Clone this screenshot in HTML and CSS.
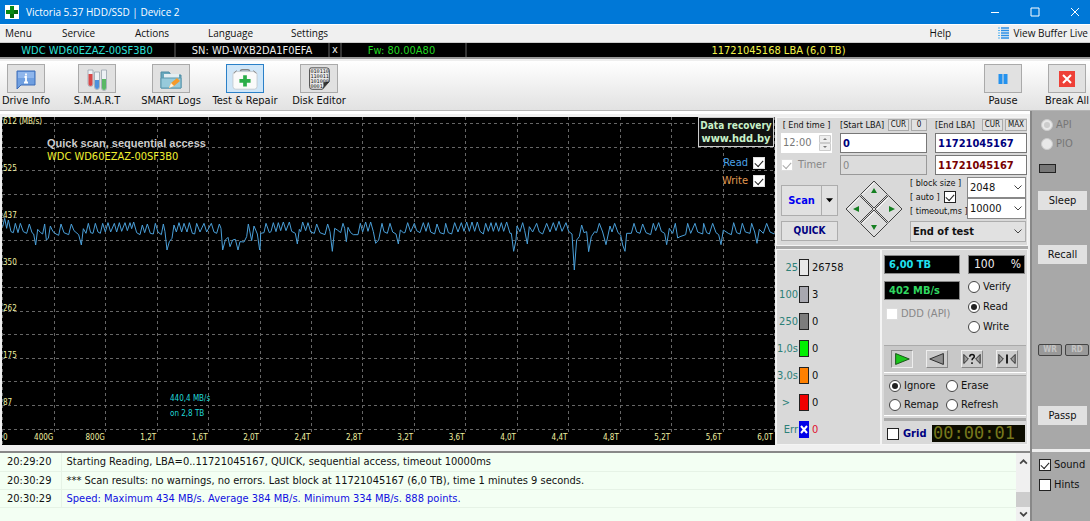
FILE: index.html
```html
<!DOCTYPE html>
<html lang="en">
<head>
<meta charset="utf-8">
<title>Victoria 5.37 HDD/SSD | Device 2</title>
<link rel="stylesheet" href="styles.css">
</head>
<body>
<header class="titlebar">
  <svg class="app-icon" viewBox="0 0 14 14"><rect width="14" height="14" fill="#fff"/><path d="M5 1h4v4h4v4H9v4H5V9H1V5h4z" fill="#0a8a14"/><path d="M5 9h4v4H5zM9 5h4v4H9z" fill="#056a0c"/></svg>
  <h1 class="title">Victoria 5.37 HDD/SSD | Device 2</h1>
  <button class="win-btn" aria-label="Minimize"><svg viewBox="0 0 10 10"><path d="M1 5.5h8" /></svg></button>
  <button class="win-btn" aria-label="Maximize"><svg viewBox="0 0 10 10"><path d="M1 1h8v8H1z" /></svg></button>
  <button class="win-btn" aria-label="Close"><svg viewBox="0 0 10 10"><path d="M1 1l8 8M9 1L1 9" /></svg></button>
</header>
<nav class="menubar">
  <button class="menu-item">Menu</button>
  <button class="menu-item">Service</button>
  <button class="menu-item">Actions</button>
  <button class="menu-item">Language</button>
  <button class="menu-item">Settings</button>
  <button class="menu-item menu-help">Help</button>
  <button class="menu-item menu-live"><svg viewBox="0 0 12 12"><path d="M0 1h2M0 3.5h2M0 6h2M0 8.5h2M0 11h2" stroke="#58b4f0"/><path d="M3 1h8M3 3.5h8M3 6h8M3 8.5h8M3 11h8" stroke="#2b8fe6" stroke-width="1.5"/></svg>View Buffer Live</button>
</nav>
<div class="infobar">
  <span class="info-model">WDC WD60EZAZ-00SF3B0</span>
  <span class="info-serial">SN: WD-WXB2DA1F0EFA</span>
  <button class="info-x">x</button>
  <span class="info-fw">Fw: 80.00A80</span>
  <span class="info-lba">11721045168 LBA (6,0 TB)</span>
</div>
<div class="toolbar">
  <button class="tool tool-first"><span class="tool-face"><svg viewBox="0 0 24 24"><path d="M3 4h18v14H7l-4 4z" fill="#6f9fe0" stroke="#3c6db8"/><path d="M4 5h16v6H4z" fill="#8fb6ec"/><path d="M12 6.500v2M10.500 10H12v5M10 15.500h4" stroke="#fff" stroke-width="1.800" fill="none"/></svg></span>Drive Info</button>
  <button class="tool"><span class="tool-face"><svg viewBox="0 0 24 24"><g stroke="#99a3ad" stroke-width=".8"><path d="M3 3h5v14a2.500 2.500 0 0 1-5 0z" fill="#edf1f5"/><path d="M9.500 5h5v15a2.500 2.500 0 0 1-5 0z" fill="#edf1f5"/><path d="M16.500 3h5v18a2.500 2.500 0 0 1-5 0z" fill="#edf1f5"/></g><path d="M3.500 7h4v10a2 2 0 0 1-4 0z" fill="#d94848"/><path d="M10 13h4v7a2 2 0 0 1-4 0z" fill="#4d91dc"/><path d="M17 12h4v9a2 2 0 0 1-4 0z" fill="#59b865"/></svg></span>S.M.A.R.T</button>
  <button class="tool"><span class="tool-face"><svg viewBox="0 0 24 24"><path d="M2 5h8l2 3h10v13H2z" fill="#69a8bd" stroke="#4f8ca4"/><path d="M5 7h15v7H5z" fill="#e4eef2"/><path d="M2 11h20v10H2z" fill="#96cadb" stroke="#5a98ae"/><path d="M10 21l2-5 6-5 3 3-6 5z" fill="#f59a2b"/><path d="M10 21l2-5 3 3z" fill="#fff1dc"/></svg></span>SMART Logs</button>
  <button class="tool tool-active"><span class="tool-face"><svg viewBox="0 0 28 24"><path d="M9 4q0-2 2-2h6q2 0 2 2" fill="none" stroke="#858585" stroke-width="1.500"/><rect x="1" y="4" width="26" height="19" rx="3" fill="#fafafa" stroke="#c2cbd2"/><path d="M2 6l3-3M26 6l-3-3" stroke="#777"/><path d="M12 8h4v4h4v4h-4v4h-4v-4H8v-4h4z" fill="#2bad48"/></svg></span>Test &amp; Repair</button>
  <button class="tool"><span class="tool-face"><svg viewBox="0 0 26 28"><path d="M4 1h18q3 0 3 3v13l-8 9H5q-3 0-3-3V3q0-2 2-2z" fill="#e9e9e9" stroke="#333"/><path d="M25 17l-8 9q2-4 1-8z" fill="#333"/><g class="bits"><text x="3" y="7">010110</text><text x="3" y="13">110011</text><text x="3" y="19">101000</text><text x="3" y="25">0001</text></g></svg></span>Disk Editor</button>
  <button class="tool tool-right tool-pause"><span class="tool-face"><svg viewBox="0 0 24 24"><path d="M7.500 7h4v10h-4zM12.500 7h4v10h-4z" fill="#2492ee"/></svg></span>Pause</button>
  <button class="tool tool-right"><span class="tool-face"><svg viewBox="0 0 24 24"><rect x="4" y="4" width="16" height="16" fill="#ee4037"/><path d="M8 8l8 8M16 8l-8 8" stroke="#fff" stroke-width="2"/></svg></span>Break All</button>
</div>
<div class="shell">
  <main class="left">
    <div class="work">
      <section class="chart">
        <svg class="plot" viewBox="0 0 773 328" preserveAspectRatio="none">
          <path class="gridline" d="M0 6.500h773M0 30.500h773M0 53.500h773M0 77.500h773M0 100.500h773M0 123.500h773M0 147.500h773M0 170.500h773M0 194.500h773M0 217.500h773M0 241.500h773M0 264.500h773M0 288.500h773M0 312.500h773"/>
          <path class="gridline" d="M.5 0v328M52.500 0v316M103.500 0v316M155.500 0v316M206.500 0v316M258.500 0v316M309.500 0v316M360.500 0v316M412.500 0v316M463.500 0v316M515.500 0v316M566.500 0v316M618.500 0v316M669.500 0v316M721.500 0v316M772.500 0v316"/>
          <g transform="translate(-2 -7) scale(.33333)">
            <polyline class="trace" points="8,350 14,325 20,355 25,330 33,365 40,368 46,340 54,368 61,340 70,365 80,370 88,342 96,368 101,372 107,405 113,358 122,368 128,372 134,342 139,390 145,385 151,348 159,365 168,372 176,376 183,342 192,368 206,374 214,342 222,362 236,374 244,405 250,356 258,370 265,340 272,368 279,370 286,340 294,366 301,370 308,340 316,366 324,338 332,366 343,340 350,366 358,338 365,364 375,338 382,362 390,338 395,356 401,336 410,368 420,374 427,345 434,368 442,342 451,370 460,372 466,340 474,366 484,374 490,342 495,365 501,420 508,395 516,385 522,345 529,366 537,338 545,366 552,340 561,366 568,338 577,370 584,372 590,340 600,366 612,340 620,366 634,340 642,366 650,370 658,342 663,355 668,420 676,390 684,382 690,410 698,390 706,388 714,420 720,395 732,396 740,380 745,342 755,392 762,348 772,372 779,420"/>
            <polyline class="trace" transform="translate(780 240)" points="0,180 2,130 12,128 18,100 28,128 33,125 40,98 48,125 55,98 62,122 70,96 78,122 88,96 95,124 106,130 112,162 118,118 122,125 128,96 137,122 144,98 152,126 163,130 170,102 180,128 195,134 203,102 210,125 217,184 224,115 232,120 242,128 249,100 254,115 259,155 264,112 272,128 280,134 294,134 301,100 308,126 317,96 324,124 332,96 340,125 347,160 356,150 366,100 372,125 382,130 390,100 398,126 408,132 415,162 421,120 430,128 435,128 443,98 452,126 463,100 470,122 480,128 490,98 498,124 505,98 512,126 524,132 531,102 540,128 552,132 557,100 565,128 575,132 584,98 594,126 604,98 612,124 620,96 628,124 636,96 644,124 652,96 660,124 670,132 677,100 685,124 693,98 700,124 708,98 716,124 724,98 731,124 740,96 750,130 754,130 761,184 768,150 771,108 780,125"/>
            <polyline class="trace" transform="translate(1560 0)" points="0,365 8,338 14,362 22,402 28,350 38,366 50,340 58,366 68,372 80,340 90,366 100,338 108,362 117,334 126,364 138,338 146,364 156,372 163,480 170,390 178,380 185,345 192,368 200,365 206,425 214,380 224,365 230,368 238,340 248,366 258,404 270,348 276,366 284,340 294,368 302,375 308,405 315,424 320,370 334,370 342,340 350,366 360,370 368,342 378,368 392,374 400,340 407,362 416,338 424,364 434,370 440,404 448,355 458,370 466,340 473,384 480,380 497,374 503,340 512,370 525,340 533,366 548,372 551,340 560,368 568,372 578,340 588,368 596,374 603,404 610,360 625,370 634,374 641,338 650,368 660,372 667,340 676,366 690,370 695,340 704,366 711,400 718,358 730,370 740,340 750,366 763,372"/>
          </g>
        </svg>
        <div class="y-axis"><span>612 (MB/s)</span><span>525</span><span>437</span><span>350</span><span>262</span><span>175</span><span>87</span></div>
        <div class="x-axis"><span class="x-first"><i>0</i><i>400G</i></span><span>800G</span><span>1,2T</span><span>1,6T</span><span>2,0T</span><span>2,4T</span><span>2,8T</span><span>3,2T</span><span>3,6T</span><span>4,0T</span><span>4,4T</span><span>4,8T</span><span>5,2T</span><span>5,6T</span><span>6,0T</span></div>
        <div class="chart-head"><h2>Quick scan, sequential access</h2><p>WDC WD60EZAZ-00SF3B0</p></div>
        <div class="chart-mark">440,4 MB/s<br>on 2,8 TB</div>
        <a class="promo" href="#"><span>Data recovery</span><b>www.hdd.by</b></a>
        <div class="legend">
          <label class="lg-read">Read<input type="checkbox" class="check" checked></label>
          <label class="lg-write">Write<input type="checkbox" class="check" checked></label>
        </div>
      </section>
      <section class="panels">
        <div class="panel scan-panel">
          <div class="lba">
            <label class="cap" for="endtime">[ End time ]</label>
            <div class="cap-row"><label class="cap" for="start">[Start LBA]</label><button class="mini">CUR</button><button class="mini">0</button></div>
            <div class="cap-row"><label class="cap" for="end">[End LBA]</label><button class="mini">CUR</button><button class="mini">MAX</button></div>
            <div class="spin"><input id="endtime" type="text" value="12:00" disabled><svg viewBox="0 0 12 16"><path d="M.5.500h11v7H.5zM.5 8.500h11v7H.5z" fill="#eee" stroke="#ccc"/><path d="M4 5l2-2 2 2zM4 11l2 2 2-2z" fill="#777"/></svg></div>
            <input id="start" class="field navy" type="text" value="0">
            <input id="end" class="field navy" type="text" value="11721045167">
            <label class="timer"><input type="checkbox" class="check" checked disabled>Timer</label>
            <input class="field off" type="text" value="0" aria-label="Timer value" disabled>
            <input class="field maroon" type="text" value="11721045167" aria-label="Current LBA">
          </div>
          <div class="scan">
            <div class="scan-left">
              <div class="split"><button class="btn scan-btn">Scan</button><button class="btn drop-btn" aria-label="Scan options"><svg viewBox="0 0 8 5"><path d="M0 0h8L4 4.500z"/></svg></button></div>
              <button class="btn quick-btn">QUICK</button>
            </div>
            <svg class="pad" viewBox="0 0 58 58"><g stroke="#444" fill="#dcdcdc"><path d="M29 1l13.500 13.500L29 28 15.500 14.500z"/><path d="M14.500 15.500L28 29 14.500 42.500 1 29z"/><path d="M43.500 15.500L57 29 43.500 42.500 30 29z"/><path d="M29 30l13.500 13.500L29 57 15.500 43.500z"/></g><path d="M29 3L17 14.500M14 18L3 29M43 18L32 29M29 32L17 43.500" stroke="#fafafa"/><path d="M29 8l3 5h-6zM29 50l3-5h-6zM8 29l6-3v6zM50 29l-6-3v6z" fill="#168022"/></svg>
            <div class="scan-right">
              <div class="params">
                <label class="cap" for="bs">[ block size ]</label>
                <label class="cap auto">[ auto ]<input type="checkbox" class="check" checked></label>
                <label class="cap" for="to">[ timeout,ms ]</label>
              </div>
              <div class="combos">
                <span class="combo"><select id="bs"><option>2048</option></select><svg viewBox="0 0 8 5"><path d="M.5.500L4 4 7.500.500"/></svg></span>
                <span class="combo"><select id="to"><option>10000</option></select><svg viewBox="0 0 8 5"><path d="M.5.500L4 4 7.500.500"/></svg></span>
              </div>
              <span class="combo combo-end"><select aria-label="When finished"><option>End of test</option></select><svg viewBox="0 0 8 5"><path d="M.5.500L4 4 7.500.500"/></svg></span>
            </div>
          </div>
        </div>
        <div class="panel stats-panel">
          <dl class="hist">
            <dt>25</dt><dd><i class="bar b25"></i>26758</dd>
            <dt>100</dt><dd><i class="bar b100"></i>3</dd>
            <dt>250</dt><dd><i class="bar b250"></i>0</dd>
            <dt>1,0s</dt><dd><i class="bar b1"></i>0</dd>
            <dt>3,0s</dt><dd><i class="bar b3"></i>0</dd>
            <dt class="over">&gt;</dt><dd><i class="bar bmax"></i>0</dd>
            <dt>Err</dt><dd class="err"><i class="bar berr"><svg viewBox="0 0 10 16"><path d="M2 5l6 7M8 5l-6 7" stroke="#fff" stroke-width="2"/></svg></i>0</dd>
          </dl>
          <div class="ctl">
            <div class="readouts">
              <div class="read-left">
                <output class="lcd cyan">6,00 TB</output>
                <output class="lcd green">402 MB/s</output>
                <label class="opt ddd"><input type="checkbox" class="check" disabled>DDD (API)</label>
              </div>
              <div class="read-right">
                <output class="lcd pct"><span>100</span><span>%</span></output>
                <label class="opt"><input type="radio" class="radio" name="mode">Verify</label>
                <label class="opt"><input type="radio" class="radio" name="mode" checked>Read</label>
                <label class="opt"><input type="radio" class="radio" name="mode">Write</label>
              </div>
            </div>
            <div class="play">
              <button class="play-btn pressed" aria-label="Forward"><svg viewBox="0 0 22 16"><path d="M4 2l15 6-15 6z" fill="#1cc51c" stroke="#124a12"/></svg></button>
              <button class="play-btn" aria-label="Backward"><svg viewBox="0 0 22 16"><path d="M18 2L3 8l15 6z" fill="#909090" stroke="#222"/></svg></button>
              <button class="play-btn" aria-label="Random"><svg viewBox="0 0 22 16"><path d="M2 3v10l5-5zM20 3v10l-5-5z" fill="#999" stroke="#222"/><path d="M8.500 5.500q0-2.500 2.500-2.500t2.500 2.300q0 1.200-1.500 2-.9.600-.9 2M11 11.500v2" fill="none" stroke="#111" stroke-width="1.700"/></svg></button>
              <button class="play-btn" aria-label="Butterfly"><svg viewBox="0 0 22 16"><path d="M2 3v10l5-5zM20 3v10l-5-5z" fill="#999" stroke="#222"/><path d="M11 3v10" stroke="#111" stroke-width="2"/></svg></button>
            </div>
            <div class="actions">
              <label class="opt"><input type="radio" class="radio" name="act" checked>Ignore</label>
              <label class="opt"><input type="radio" class="radio" name="act">Erase</label>
              <label class="opt"><input type="radio" class="radio" name="act">Remap</label>
              <label class="opt"><input type="radio" class="radio" name="act">Refresh</label>
            </div>
            <div class="grid-row">
              <label class="opt grid-opt"><input type="checkbox" class="check dark">Grid</label>
              <output class="clock">00:00:01</output>
            </div>
          </div>
        </div>
      </section>
    </div>
    <div class="log">
      <table>
        <tr><td class="time">20:29:20</td><td>Starting Reading, LBA=0..11721045167, QUICK, sequential access, timeout 10000ms</td></tr>
        <tr><td class="time">20:30:29</td><td>*** Scan results: no warnings, no errors. Last block at 11721045167 (6,0 TB), time 1 minutes 9 seconds.</td></tr>
        <tr><td class="time">20:30:29</td><td class="speed">Speed: Maximum 434 MB/s. Average 384 MB/s. Minimum 334 MB/s. 888 points.</td></tr>
      </table>
      <div class="scroll"><svg viewBox="0 0 8 5"><path d="M1 4l3-3 3 3"/></svg><i class="thumb"></i><svg viewBox="0 0 8 5"><path d="M1 1l3 3 3-3"/></svg></div>
    </div>
  </main>
  <aside class="side">
    <div class="side-main">
      <label class="opt faded"><input type="radio" class="radio" name="io" checked disabled>API</label>
      <label class="opt faded"><input type="radio" class="radio" name="io" disabled>PIO</label>
      <i class="lamp"></i>
      <button class="side-btn sleep">Sleep</button>
      <button class="side-btn recall">Recall</button>
      <div class="leds"><span>WR</span><span>RD</span></div>
      <button class="side-btn passp">Passp</button>
    </div>
    <div class="side-foot">
      <label class="opt"><input type="checkbox" class="check dark" checked>Sound</label>
      <label class="opt"><input type="checkbox" class="check dark">Hints</label>
    </div>
  </aside>
</div>
</body>
</html>
```
FILE: styles.css
```css
* { box-sizing: border-box; }
body {
  margin: 0;
  min-height: 100vh;
  display: flex;
  flex-direction: column;
  background: #f0f0f0;
  color: #111;
  font: 11px/14px "DejaVu Sans Condensed", "DejaVu Sans", sans-serif;
}
button, input, select { font: inherit; color: inherit; margin: 0; padding: 0; border-radius: 0; }
button { border: 0; background: none; white-space: nowrap; }
h1, h2, p, dl, dd, dt { margin: 0; font-weight: normal; }
i { font-style: normal; }
svg { display: block; }

.titlebar { display: flex; align-items: center; height: 24px; padding-left: 5px; background: #0078d7; color: #fff; }
.app-icon { width: 14px; height: 14px; margin-right: 7px; }
.title { flex: 1; font: 10px/20px "Open Sans", sans-serif; }
.win-btn { display: flex; justify-content: center; align-items: center; width: 40px; height: 22px; }
.win-btn:last-child { justify-content: flex-end; width: 35px; padding-right: 10px; }
.win-btn svg { width: 10px; height: 10px; fill: none; stroke: #fff; }

.menubar { display: flex; align-items: center; height: 18px; padding: 0 2px 2px 5px; border-top: 1px solid #fff; font: 10px/16px "Open Sans", sans-serif; }
.menu-item { min-width: 73px; text-align: left; }
.menu-item:first-child { min-width: 57px; }
.menu-item:nth-child(4) { min-width: 83px; }
.menu-help { margin-left: auto; min-width: 68px; }
.menu-live { display: flex; align-items: center; gap: 4px; min-width: 88px; }
.menu-live svg { width: 12px; height: 12px; }

.infobar { display: flex; height: 17px; margin-bottom: 1px; background: #000; color: #eee; text-align: center; border-top: 1px solid #ccc; border-bottom: 2px solid #999; line-height: 15px; }
.infobar > * { border-right: 2px solid #333; }
.info-model { flex: 0 0 176px; color: #2ce0d8; }
.info-serial { flex: 0 0 154px; }
.info-x { flex: 0 0 12px; line-height: 12px; }
.info-fw { flex: 0 0 125px; padding-right: 4px; color: #20d820; }
.infobar .info-lba { flex: 1; border: 0; color: #f4f44a; }

.toolbar { display: flex; height: 51px; padding-top: 3px; border-top: 1px solid #eee; border-bottom: 1px solid #b5b5b5; background: linear-gradient(#fff, #e2e2e2); }
.tool { flex: 0 0 74px; display: flex; flex-direction: column; align-items: center; gap: 1px; }
.tool-first { flex-basis: 52px; margin-right: 8px; }
.tool-face { display: flex; justify-content: center; align-items: center; width: 38px; height: 29px; border: 1px solid #aaa; background: #e1e1e1; }
.tool-face svg { width: 26px; height: 24px; }
.tool-active .tool-face { border-color: #2a80c8; background: #cfe6f8; }
.tool-right { flex-basis: 46px; }
.tool-pause { margin-left: auto; margin-right: 18px; }
.bits { font: 6px "DejaVu Sans Mono", monospace; fill: #111; }

.shell { flex: 1; display: flex; }
.left { flex: 1; min-width: 0; display: flex; flex-direction: column; border-right: 2px solid #888; }
.work { flex: 1; display: flex; border-top: 3px solid #fff; padding: 3px 2px 6px 2px; }
.chart { flex: 1; position: relative; display: flex; flex-direction: column; justify-content: space-between; background: #000; min-width: 0; }
.plot { position: absolute; inset: 0; width: 100%; height: 100%; }
.gridline { stroke: #666; stroke-dasharray: 3 3; fill: none; }
.trace { fill: none; stroke: #4a9fd8; vector-effect: non-scaling-stroke; }
.y-axis { position: relative; flex: 1; display: grid; grid-template-rows: repeat(7, 1fr); margin-bottom: -14px; color: #f0f0a0; font-size: 8px; line-height: 10px; }
.y-axis span { justify-self: start; padding: 0 1px; }
.x-axis { position: relative; display: grid; grid-template-columns: repeat(15, 1fr); padding-right: 2px; color: #f0f0a0; font-size: 8px; line-height: 14px; text-align: right; }
.x-first { display: flex; justify-content: space-between; padding-left: 1px; }
.chart-head { position: absolute; left: 45px; top: 19px; }
.chart-head h2 { color: #ccc; font: bold 11px/14px "Liberation Sans", sans-serif; }
.chart-head p { color: #f0f030; }
.chart-mark { position: absolute; left: 168px; bottom: 24px; color: #20d8d8; font-size: 8px; line-height: 15px; }
.promo { position: absolute; right: 1px; top: 0; display: flex; flex-direction: column; align-items: center; width: 76px; border: 1px solid #ccc; background: #111; color: #c8f0c8; font: bold 10px/13px "DejaVu Sans Condensed", sans-serif; text-decoration: none; padding: 1px 0; }
.promo b { font-size: 11px; }
.legend { position: absolute; right: 10px; top: 39px; display: flex; flex-direction: column; align-items: flex-end; gap: 4px; }
.legend label { display: flex; align-items: center; gap: 5px; }
.lg-read { color: #4aa3e8; }
.lg-write { color: #e09a50; }

.check { appearance: none; display: grid; place-items: center; width: 12px; height: 12px; background: #fff; border: 1px solid #ddd; flex: none; }
.check.dark, .auto .check { border-color: #222; }
.check:checked::before { content: ""; width: 7px; height: 4px; border: solid #222; border-width: 0 0 1px 1px; transform: translateY(-1px) rotate(-48deg); }
.check:disabled::before { border-color: #aaa; }
.radio { appearance: none; display: grid; place-items: center; width: 12px; height: 12px; background: #fff; border: 1px solid #444; border-radius: 50%; flex: none; }
.radio:checked::before { content: ""; width: 6px; height: 6px; border-radius: 50%; background: #222; }
.radio:disabled { border-color: #ccc; }
.radio:disabled::before { background: #ccc; }
.opt { display: flex; align-items: center; gap: 3px; white-space: nowrap; }

.panels { flex: 0 0 252px; display: flex; flex-direction: column; gap: 3px; background: #aaa; margin-left: 1px; }
.panel { background: #d9d9d9; border: 1px solid #f4f4f4; }
.scan-panel { padding: 0 0 3px 4px; }
.lba { display: grid; grid-template-columns: 51px 87px 92px; column-gap: 8px; row-gap: 2px; align-items: center; }
.cap { font-size: 9px; line-height: 12px; white-space: nowrap; }
.lba > .cap { text-align: center; }
.cap-row { display: flex; justify-content: space-between; gap: 2px; height: 13px; align-items: center; }
.cap-row .cap { flex: 1; }
.mini { min-width: 16px; height: 12px; padding: 0 2px; border: 1px solid #aaa; background: #e1e1e1; font-size: 8px; line-height: 8px; }
.spin { display: flex; align-items: center; height: 20px; padding: 1px 1px 1px 2px; background: #fff; color: #777; }
.spin input { flex: 1; min-width: 0; border: 0; background: none; }
.spin svg { width: 12px; height: 16px; }
.field { width: 100%; height: 20px; padding-left: 2px; border: 1px solid #777; background: #fff; font-weight: bold; line-height: 18px; }
.navy { color: #00007c; }
.maroon { color: #780000; }
.off { color: #888; background: #dcdcdc; border-color: #999; font-weight: normal; }
.timer { display: flex; align-items: center; gap: 5px; color: #888; }
.scan { display: flex; gap: 7px; margin-top: 2px; }
.scan-left { display: flex; flex-direction: column; gap: 5px; width: 57px; padding-top: 8px; }
.btn { border: 1px solid #adadad; background: #e1e1e1; }
.split { display: flex; height: 31px; }
.scan-btn { flex: 1; color: #0000f0; font-weight: bold; }
.drop-btn { display: grid; place-items: center; width: 17px; margin-left: -1px; }
.drop-btn svg { width: 7px; height: 5px; }
.quick-btn { height: 20px; color: #000080; font-weight: bold; font-size: 10px; }
.pad { width: 58px; height: 58px; margin-top: 3px; fill: none; }
.scan-right { flex: 0 0 116px; display: grid; grid-template-columns: 57px 59px; row-gap: 2px; }
.params { display: flex; flex-direction: column; justify-content: space-between; padding-bottom: 2px; }
.auto { display: flex; align-items: center; gap: 4px; }
.combos { display: flex; flex-direction: column; }
.combo { display: grid; align-items: center; }
.combo > * { grid-area: 1 / 1; }
.combo select { appearance: none; width: 100%; height: 21px; padding-left: 2px; border: 1px solid #888; background: #fff; }
.combo svg { width: 8px; height: 5px; justify-self: end; margin-right: 4px; fill: none; stroke: #444; pointer-events: none; }
.combo-end { grid-column: 1 / 3; }
.combo-end select { background: #e1e1e1; border-color: #adadad; font-weight: bold; }

.stats-panel { flex: 1; display: flex; }
.hist { flex: 0 0 103px; display: grid; grid-template-columns: 21px 1fr; grid-auto-rows: 27px; column-gap: 1px; padding-top: 4px; align-items: center; }
.hist dt { color: #2d8078; text-align: right; }
.hist .over { padding-right: 8px; }
.hist dd { display: flex; align-items: center; gap: 3px; }
.bar { width: 10px; height: 17px; border: 1px solid #222; }
.b25 { background: #e8e8e8; }
.b100 { background: #a8a8b0; }
.b250 { background: #7c7c7c; }
.b1 { background: #00f000; }
.b3 { background: #ff8000; }
.bmax { background: #f00000; }
.berr { background: #0000e8; border: 0; }
.err { color: #e01030; }
.ctl { flex: 1; border-left: 2px solid #f4f4f4; padding: 5px 1px 0 2px; display: flex; flex-direction: column; }
.readouts { display: flex; justify-content: space-between; height: 90px; padding-right: 1px; }
.read-left { width: 76px; display: flex; flex-direction: column; gap: 7px; }
.read-right { width: 57px; display: flex; flex-direction: column; gap: 6px; }
.lcd { display: block; height: 19px; padding-left: 4px; border: 1px solid #888; background: #000; font-weight: bold; line-height: 17px; }
.cyan { color: #20e0f0; }
.green { color: #30d860; }
.pct { display: flex; justify-content: space-between; padding: 0 3px 0 5px; color: #eee; font-weight: normal; font-size: 12px; }
.ddd { color: #888; padding: 0 2px; }
.play { display: flex; justify-content: space-between; align-items: center; height: 28px; padding: 0 8px 0 7px; background: #c8c8c8; border-top: 1px solid #aaa; border-bottom: 1px solid #fff; }
.play-btn { width: 22px; height: 18px; border: 1px solid; border-color: #eee #888 #888 #eee; background: #ccc; }
.play-btn svg { width: 20px; height: 16px; }
.pressed { border-color: #888 #eee #eee #888; }
.actions { display: grid; grid-template-columns: 57px 1fr; align-items: center; height: 41px; margin-top: 2px; padding-left: 5px; background: #c8c8c8; border-top: 1px solid #aaa; border-bottom: 1px solid #fff; }
.grid-row { display: flex; justify-content: space-between; align-items: center; margin-top: 2px; padding: 4px 1px 0 3px; border-top: 3px solid #aaa; }
.grid-opt { color: #000080; font-weight: bold; gap: 4px; }
.clock { width: 93px; height: 17px; background: #0c0c00; color: #77771c; font: 17px/17px "DejaVu Sans Mono", monospace; padding-left: 1px; }

.log { flex: 0 0 70px; display: flex; border-top: 2px solid #888; background: #f3fff3; }
.log table { flex: 1; border-collapse: collapse; align-self: flex-start; }
.log td { height: 18px; padding: 1px 5px 0; border-bottom: 1px solid #e6f3e6; line-height: 16px; white-space: nowrap; }
.log .time { width: 61px; padding-left: 7px; border-right: 1px solid #e6f3e6; }
.log .speed { color: #1010e0; }
.scroll { width: 14px; display: flex; flex-direction: column; align-items: center; padding: 6px 0 4px; background: #f0f0f0; }
.scroll svg { width: 9px; height: 6px; fill: none; stroke: #444; stroke-width: 1.5; }
.thumb { width: 100%; height: 15px; margin: auto 0 4px; background: #cdcdcd; }

.side { flex: 0 0 58px; display: flex; flex-direction: column; background: #a8a8a8; }
.side-main { flex: 1; display: flex; flex-direction: column; align-items: flex-start; padding: 7px 1px 24px 6px; gap: 5px; border-bottom: 3px solid #eee; }
.side-main .opt { padding-left: 3px; }
.faded { color: #777; }
.faded .radio { background: #e8e8e8; }
.lamp { width: 17px; height: 9px; margin: 8px 0 0 1px; background: #777; border: 1px solid #222; }
.side-btn { width: 49px; height: 19px; background: #e1e1e1; }
.sleep { margin-top: 13px; }
.recall { margin-top: 30px; }
.leds { display: flex; justify-content: space-between; width: 100%; margin: auto 0 45px; }
.leds span { width: 24px; height: 12px; border: 1px solid #444; border-radius: 2px; background: #999; color: #c4c4c4; font-size: 8px; font-weight: bold; line-height: 10px; text-align: center; }
.side-foot { flex: 0 0 69px; display: flex; flex-direction: column; gap: 6px; padding: 6px 0 0 7px; }
```
